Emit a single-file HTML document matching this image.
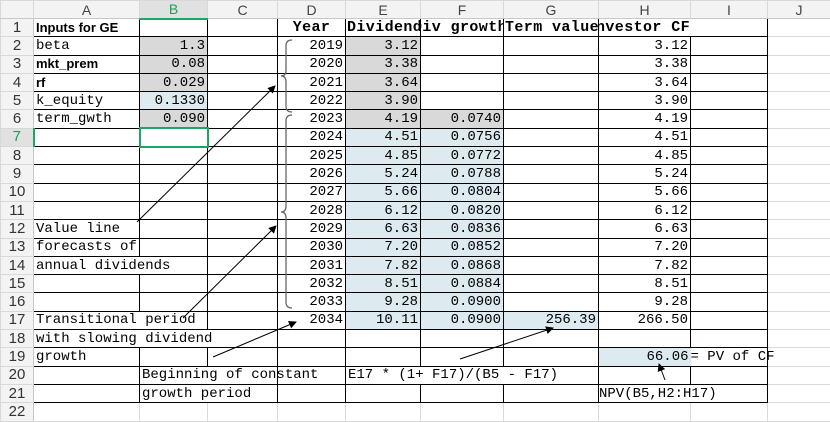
<!DOCTYPE html>
<html><head><meta charset="utf-8"><style>
*{margin:0;padding:0;box-sizing:border-box}
body{width:830px;height:422px;overflow:hidden;background:#fff;position:relative;font-family:"Liberation Mono",monospace;font-size:14px;color:#000}
table{border-collapse:collapse;table-layout:fixed;position:absolute;left:0;top:0;width:830px}
td{height:18.3px;border:1px solid #000;white-space:nowrap;overflow:visible;padding:0 2px;line-height:16px;letter-spacing:0}
tr.h td{height:18px;background:#f3f3f3;border:1px solid #d8d8d8;border-bottom:1px solid #c8c8c8;text-align:center;font-family:"Liberation Sans",sans-serif;color:#444;font-size:14px;letter-spacing:0}
td.n{background:#f3f3f3;border:1px solid #d8d8d8;border-right:1px solid #c8c8c8;text-align:center;font-family:"Liberation Sans",sans-serif;color:#333;font-size:15px;letter-spacing:0}
td.x{border:1px solid #dadada}
.g{background:#d9d9d9}.b{background:#ddebf1}
.r{text-align:right}
.s{font-family:"Liberation Sans",sans-serif;font-weight:bold;letter-spacing:0;font-size:13px}
.hb{font-weight:bold;font-family:"Liberation Mono",monospace;font-size:15px;letter-spacing:0.4px}
td.nl{border-right:none}td.nr{border-left:none}
</style></head><body>
<table>
<colgroup><col style="width:33px"><col style="width:106px"><col style="width:68px"><col style="width:70px"><col style="width:68px"><col style="width:75px"><col style="width:83px"><col style="width:95px"><col style="width:92px"><col style="width:77px"><col style="width:63px"></colgroup>
<tr class="h"><td></td><td>A</td><td style="background:#e1e1e1;color:#1f9d5a;border-bottom:2px solid #21a366">B</td><td>C</td><td>D</td><td>E</td><td>F</td><td>G</td><td>H</td><td>I</td><td>J</td></tr>
<tr><td class="n">1</td><td class="s">Inputs for GE</td><td></td><td></td><td class="hb" style="text-align:center">Year</td><td class="hb" style="overflow:hidden;padding:0 1px">Dividend</td><td class="hb" style="overflow:hidden;padding:0 0 0 1px;text-indent:-9px">Div growth</td><td class="hb" style="overflow:hidden;padding:0 1px">Term value</td><td class="hb nl" style="overflow:hidden;padding:0 0;text-indent:-4px">nvestor CF</td><td class="nr"></td><td class="x"></td></tr>
<tr><td class="n">2</td><td>beta</td><td class="g r">1.3</td><td></td><td class="r">2019</td><td class="g r">3.12</td><td></td><td></td><td class="r">3.12</td><td></td><td class="x"></td></tr>
<tr><td class="n">3</td><td class="s">mkt_prem</td><td class="g r">0.08</td><td></td><td class="r">2020</td><td class="g r">3.38</td><td></td><td></td><td class="r">3.38</td><td></td><td class="x"></td></tr>
<tr><td class="n">4</td><td class="s">rf</td><td class="g r">0.029</td><td></td><td class="r">2021</td><td class="g r">3.64</td><td></td><td></td><td class="r">3.64</td><td></td><td class="x"></td></tr>
<tr><td class="n">5</td><td>k_equity</td><td class="b r">0.1330</td><td></td><td class="r">2022</td><td class="g r">3.90</td><td></td><td></td><td class="r">3.90</td><td></td><td class="x"></td></tr>
<tr><td class="n">6</td><td>term_gwth</td><td class="g r">0.090</td><td></td><td class="r">2023</td><td class="g r">4.19</td><td class="g r">0.0740</td><td></td><td class="r">4.19</td><td></td><td class="x"></td></tr>
<tr><td class="n" style="color:#1f9d5a;background:#e1e1e1">7</td><td style="border-left:2px solid #21a366"></td><td style="border:2px solid #21a366"></td><td></td><td class="r">2024</td><td class="b r">4.51</td><td class="b r">0.0756</td><td></td><td class="r">4.51</td><td></td><td class="x"></td></tr>
<tr><td class="n">8</td><td></td><td></td><td></td><td class="r">2025</td><td class="b r">4.85</td><td class="b r">0.0772</td><td></td><td class="r">4.85</td><td></td><td class="x"></td></tr>
<tr><td class="n">9</td><td></td><td></td><td></td><td class="r">2026</td><td class="b r">5.24</td><td class="b r">0.0788</td><td></td><td class="r">5.24</td><td></td><td class="x"></td></tr>
<tr><td class="n">10</td><td></td><td></td><td></td><td class="r">2027</td><td class="b r">5.66</td><td class="b r">0.0804</td><td></td><td class="r">5.66</td><td></td><td class="x"></td></tr>
<tr><td class="n">11</td><td></td><td></td><td></td><td class="r">2028</td><td class="b r">6.12</td><td class="b r">0.0820</td><td></td><td class="r">6.12</td><td></td><td class="x"></td></tr>
<tr><td class="n">12</td><td>Value line</td><td></td><td></td><td class="r">2029</td><td class="b r">6.63</td><td class="b r">0.0836</td><td></td><td class="r">6.63</td><td></td><td class="x"></td></tr>
<tr><td class="n">13</td><td>forecasts of</td><td></td><td></td><td class="r">2030</td><td class="b r">7.20</td><td class="b r">0.0852</td><td></td><td class="r">7.20</td><td></td><td class="x"></td></tr>
<tr><td class="n">14</td><td class="nl">annual dividends</td><td class="nr"></td><td></td><td class="r">2031</td><td class="b r">7.82</td><td class="b r">0.0868</td><td></td><td class="r">7.82</td><td></td><td class="x"></td></tr>
<tr><td class="n">15</td><td></td><td></td><td></td><td class="r">2032</td><td class="b r">8.51</td><td class="b r">0.0884</td><td></td><td class="r">8.51</td><td></td><td class="x"></td></tr>
<tr><td class="n">16</td><td></td><td></td><td></td><td class="r">2033</td><td class="b r">9.28</td><td class="b r">0.0900</td><td></td><td class="r">9.28</td><td></td><td class="x"></td></tr>
<tr><td class="n">17</td><td class="nl">Transitional period</td><td class="nr"></td><td></td><td class="r">2034</td><td class="b r">10.11</td><td class="b r">0.0900</td><td class="b r">256.39</td><td class="r">266.50</td><td></td><td class="x"></td></tr>
<tr><td class="n">18</td><td class="nl">with slowing dividend</td><td class="nl nr"></td><td class="nr"></td><td></td><td></td><td></td><td></td><td></td><td></td><td class="x"></td></tr>
<tr><td class="n">19</td><td>growth</td><td></td><td></td><td></td><td></td><td></td><td></td><td class="b r nl">66.06</td><td class="nr" style="padding-left:0">= PV of CF</td><td class="x"></td></tr>
<tr><td class="n">20</td><td></td><td class="nl">Beginning of constant</td><td class="nr"></td><td></td><td class="nl">E17 * (1+ F17)/(B5 - F17)</td><td class="nl nr"></td><td class="nr"></td><td></td><td></td><td class="x"></td></tr>
<tr><td class="n">21</td><td></td><td class="nl">growth period</td><td class="nr"></td><td></td><td></td><td></td><td></td><td class="nl" style="padding:0">NPV(B5,H2:H17)</td><td class="nr"></td><td class="x"></td></tr>
<tr><td class="n">22</td><td class="x"></td><td class="x"></td><td class="x"></td><td class="x"></td><td class="x"></td><td class="x"></td><td class="x"></td><td class="x"></td><td class="x"></td><td class="x"></td></tr>
</table>
<svg width="830" height="422" style="position:absolute;left:0;top:0" viewBox="0 0 830 422">
<defs><marker id="a" markerWidth="8" markerHeight="8" refX="7" refY="4" orient="auto" markerUnits="userSpaceOnUse"><path d="M0,0 L8,4 L0,8 z" fill="#000"/></marker></defs>
<g stroke="#000" stroke-width="1" marker-end="url(#a)">
<line x1="137" y1="222" x2="275" y2="86"/>
<line x1="183" y1="318" x2="276" y2="226"/>
<line x1="213" y1="357" x2="296" y2="322"/>
<line x1="460" y1="359" x2="553" y2="328"/>
<line x1="665" y1="380" x2="659" y2="364"/>
</g>
<g fill="none" stroke="#666" stroke-width="1.3">
<path d="M292,40 Q286,40 286,46 L286,70 Q286,76 281,76 Q286,76 286,82 L286,106 Q286,112 292,112"/>
<path d="M292,115 Q286,115 286,121 L286,206 Q286,212 281,212 Q286,212 286,218 L286,302 Q286,308 292,308"/>
</g>
</svg>
</body></html>
